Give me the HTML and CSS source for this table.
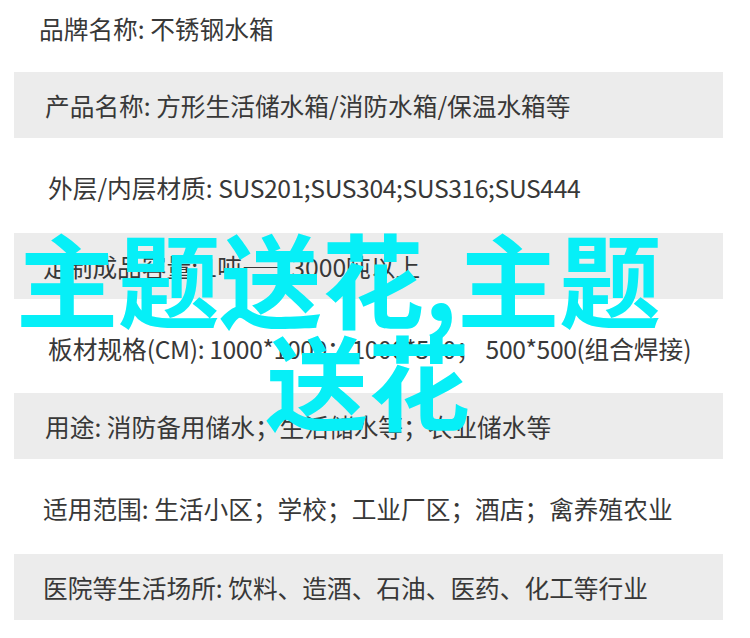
FILE: index.html
```html
<!DOCTYPE html>
<html lang="zh-CN">
<head>
<meta charset="utf-8">
<title>不锈钢水箱</title>
<link rel="stylesheet" href="styles.css">
</head>
<body>
<div class="page">
  <div class="list">
    <div class="row row-first in-l">品牌名称: 不锈钢水箱</div>
    <div class="row row-gray in-b">产品名称: 方形生活储水箱/消防水箱/保温水箱等</div>
    <div class="row row-white in-r">外层/内层材质:&nbsp;<span class="lat">SUS201;SUS304;SUS316;SUS444</span></div>
    <div class="row row-gray">定制成品容量: 1吨——3000吨以上</div>
    <div class="row row-white in-r">板材规格<span class="lat">(CM): 1000*1000</span>；<span class="lat">1000*500</span>；<span class="lat"> 500*500(</span>组合焊接<span class="lat">)</span></div>
    <div class="row row-gray in-b">用途: 消防备用储水；生活储水等；农业储水等</div>
    <div class="row row-white">适用范围: 生活小区；学校；工业厂区；酒店；禽养殖农业</div>
    <div class="row row-gray">医院等生活场所: 饮料、造酒、石油、医药、化工等行业</div>
  </div>
  <div class="overlay">
    <span class="ov-line">主题送花,主题</span>
    <span class="ov-line ov-second">送花</span>
  </div>
</div>
</body>
</html>
```

FILE: styles.css
```css
html, body {
  margin: 0;
  padding: 0;
  background: #ffffff;
}

.page {
  position: relative;
  width: 750px;
  height: 638px;
  overflow: hidden;
  font-family: "Noto Sans CJK SC", "Noto Sans", sans-serif;
}

.list {
  display: flex;
  flex-direction: column;
  padding: 0 27px 0 14px;
}

.row {
  display: flex;
  align-items: flex-start;
  box-sizing: border-box;
  padding-left: 29px;
  font-size: 24.7px;
  line-height: 34px;
  color: #383838;
  white-space: pre;
}

.lat {
  letter-spacing: -0.4px;
}

.row-first {
  height: 72px;
  padding-top: 11px;
}

.row-gray {
  height: 66px;
  align-items: center;
  background: #ececec;
}

.row-white {
  height: 94.7px;
  padding-top: 32px;
}

.in-l { padding-left: 25px; }
.in-b { padding-left: 31px; }
.in-r { padding-left: 34px; }

.overlay {
  position: absolute;
  left: 16px;
  top: 226px;
  display: flex;
  flex-direction: column;
  font-size: 102px;
  line-height: 102px;
  font-weight: 700;
  color: #06eff7;
  white-space: nowrap;
}

.ov-second {
  padding-left: 250px;
}
```
